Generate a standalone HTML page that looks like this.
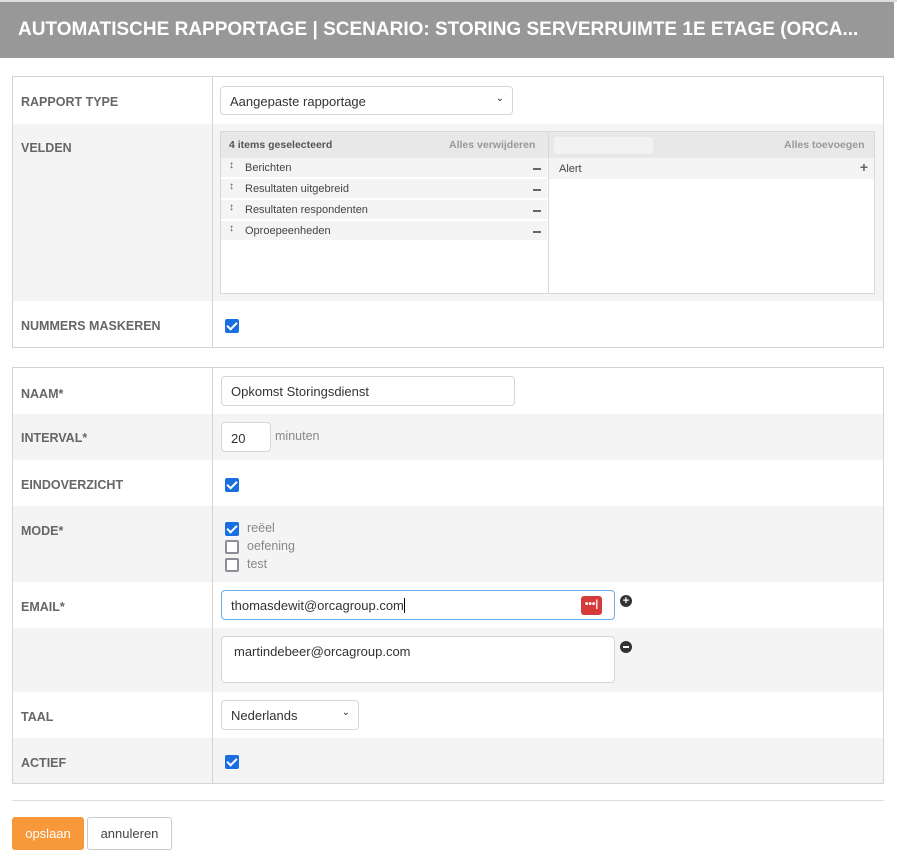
<!DOCTYPE html>
<html><head><meta charset="utf-8"><style>
*{box-sizing:border-box;margin:0;padding:0}
body{width:897px;height:863px;background:#fff;font-family:"Liberation Sans",sans-serif;color:#333;position:relative;overflow:hidden}
.hdr{position:absolute;left:0;top:2px;width:894px;height:56px;background:#989898}
.top{position:absolute;left:0;top:0;width:897px;height:2px;background:#ddd}
.title{position:absolute;left:18px;top:19px;width:870px;color:#fff;font-weight:bold;font-size:19px;white-space:nowrap;overflow:hidden}
.tbl{position:absolute;left:12px;width:872px;border:1px solid #d4d4d4}
.row{position:absolute;left:0;width:870px}
.g{background:#f4f4f4}
.lab{position:absolute;left:8px;font-weight:bold;font-size:12.5px;color:#666}
.vl{position:absolute;left:199px;top:0;bottom:0;width:1px;background:#d4d4d4}
.inp{position:absolute;background:#fff;border:1px solid #d6d6d6;border-radius:4px;font-size:13px;color:#333;padding-left:9px}
.cb{position:absolute;width:14px;height:14px;border-radius:2px;background:#1a6fe0}
.cb:after{content:"";position:absolute;left:4px;top:1px;width:4px;height:8px;border:solid #fff;border-width:0 2px 2px 0;transform:rotate(45deg)}
.cbe{position:absolute;width:14px;height:14px;border-radius:2px;border:2px solid #8d8d96;background:#fff}
.sm{font-size:11px;color:#444}
.item{position:absolute;left:0;width:326px;height:20px;background:#f4f4f4;font-size:11px;color:#444;border-bottom:1px solid #fff}
.item span{position:absolute;left:24px;top:4px}
.item b{position:absolute;left:8px;top:2px;font-size:10px;color:#555}
.item i{position:absolute;right:6px;top:10px;width:8px;height:2px;background:#666}
</style></head><body>
<div class="top"></div>
<div class="hdr"></div>
<div class="title">AUTOMATISCHE RAPPORTAGE | SCENARIO: STORING SERVERRUIMTE 1E ETAGE (ORCA...</div>

<div class="tbl" style="top:76px;height:272px">
 <div class="row" style="top:0;height:47px"><div class="lab" style="top:18px">RAPPORT TYPE</div></div>
 <div class="row g" style="top:47px;height:177px"><div class="lab" style="top:17px">VELDEN</div></div>
 <div class="row" style="top:224px;height:46px"><div class="lab" style="top:18px">NUMMERS MASKEREN</div></div>
 <div class="vl"></div>
 <div class="inp" style="left:207px;top:9px;width:293px;height:29px;padding-top:7px">Aangepaste rapportage<span style="position:absolute;right:8px;top:6px;font-size:10px">&#8964;</span></div>
 <div style="position:absolute;left:207px;top:54px;width:655px;height:163px;border:1px solid #d8d8d8;background:#fff">
  <div style="position:absolute;left:0;top:0;width:653px;height:26px;background:#e8e8e8"></div>
  <div style="position:absolute;left:8px;top:7px;font-size:10.5px;font-weight:bold;color:#555">4 items geselecteerd</div>
  <div style="position:absolute;left:228px;top:7px;font-size:10.5px;font-weight:bold;color:#999">Alles verwijderen</div>
  <div style="position:absolute;left:327px;top:0;width:1px;height:161px;background:#d8d8d8"></div>
  <div style="position:absolute;left:333px;top:5px;width:99px;height:17px;background:#f2f2f2;border-radius:3px"></div>
  <div style="position:absolute;left:563px;top:7px;font-size:10.5px;font-weight:bold;color:#999">Alles toevoegen</div>
  <div class="item" style="top:26px"><b>&#8597;</b><span>Berichten</span><i></i></div>
  <div class="item" style="top:47px"><b>&#8597;</b><span>Resultaten uitgebreid</span><i></i></div>
  <div class="item" style="top:68px"><b>&#8597;</b><span>Resultaten respondenten</span><i></i></div>
  <div class="item" style="top:89px"><b>&#8597;</b><span>Oproepeenheden</span><i></i></div>
  <div style="position:absolute;left:328px;top:26px;width:325px;height:21px;background:#f4f4f4"><span class="sm" style="position:absolute;left:10px;top:5px">Alert</span><span style="position:absolute;right:6px;top:1px;font-size:14px;color:#666;font-weight:bold">+</span></div>
 </div>
 <div class="cb" style="left:212px;top:242px"></div>
</div>

<div class="tbl" style="top:367px;height:417px">
 <div class="row" style="top:0;height:46px"><div class="lab" style="top:19px">NAAM*</div></div>
 <div class="row g" style="top:46px;height:46px"><div class="lab" style="top:17px">INTERVAL*</div></div>
 <div class="row" style="top:92px;height:46px"><div class="lab" style="top:18px">EINDOVERZICHT</div></div>
 <div class="row g" style="top:138px;height:76px"><div class="lab" style="top:18px">MODE*</div></div>
 <div class="row" style="top:214px;height:46px"><div class="lab" style="top:18px">EMAIL*</div></div>
 <div class="row g" style="top:260px;height:64px"></div>
 <div class="row" style="top:324px;height:46px"><div class="lab" style="top:18px">TAAL</div></div>
 <div class="row g" style="top:370px;height:45px"><div class="lab" style="top:18px">ACTIEF</div></div>
 <div class="vl"></div>
 <div class="inp" style="left:208px;top:8px;width:294px;height:30px;padding-top:7px">Opkomst Storingsdienst</div>
 <div class="inp" style="left:208px;top:54px;width:50px;height:30px;padding-top:8px">20</div>
 <div style="position:absolute;left:262px;top:61px;font-size:12.5px;color:#888">minuten</div>
 <div class="cb" style="left:212px;top:110px"></div>
 <div class="cb" style="left:212px;top:154px"></div>
 <div class="cbe" style="left:212px;top:172px"></div>
 <div class="cbe" style="left:212px;top:190px"></div>
 <div style="position:absolute;left:234px;top:151px;font-size:12.5px;color:#888;line-height:18px">reëel<br>oefening<br>test</div>
 <div class="inp" style="left:208px;top:222px;width:394px;height:30px;padding-top:7px;border-color:#6aaee8">thomasdewit@orcagroup.com<span style="display:inline-block;width:1px;height:15px;background:#000;vertical-align:-3px"></span>
  <div style="position:absolute;right:12px;top:5px;width:21px;height:19px;background:#d63b3b;border-radius:3px;color:#fff;font-size:10px;font-weight:bold;text-align:center;line-height:17px">&bull;&bull;&bull;|</div></div>
 <div style="position:absolute;left:607px;top:227px;width:12px;height:12px;border-radius:50%;background:#333;color:#fff;font-size:11px;font-weight:bold;text-align:center;line-height:12px">+</div>
 <div class="inp" style="left:208px;top:268px;width:394px;height:47px;padding:7px 12px;font-size:13px">martindebeer@orcagroup.com</div>
 <div style="position:absolute;left:607px;top:273px;width:12px;height:12px;border-radius:50%;background:#333"><div style="position:absolute;left:3px;top:5px;width:6px;height:2px;background:#fff"></div></div>
 <div class="inp" style="left:208px;top:332px;width:138px;height:30px;padding-top:7px">Nederlands<span style="position:absolute;right:8px;top:6px;font-size:10px">&#8964;</span></div>
 <div class="cb" style="left:212px;top:387px"></div>
</div>

<div style="position:absolute;left:12px;top:800px;width:872px;height:1px;background:#ddd"></div>
<div style="position:absolute;left:12px;top:817px;width:72px;height:33px;background:#f7993a;border-radius:3px;color:#fff;font-size:13px;text-align:center;line-height:33px">opslaan</div>
<div style="position:absolute;left:87px;top:817px;width:85px;height:33px;border:1px solid #ccc;border-radius:3px;color:#444;font-size:13px;text-align:center;line-height:31px">annuleren</div>
</body></html>
